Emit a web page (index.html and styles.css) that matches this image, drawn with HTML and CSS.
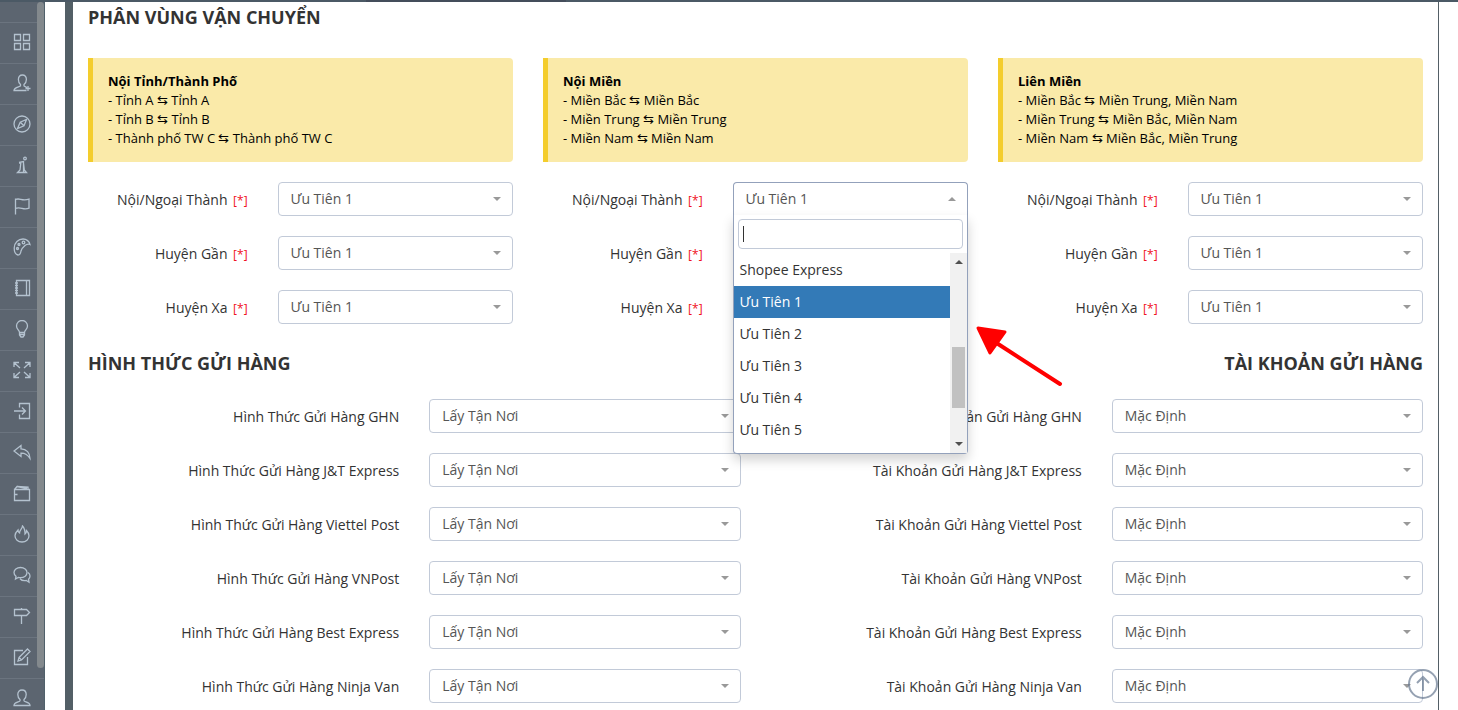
FILE: index.html
```
<!DOCTYPE html>
<html lang="vi">
<head>
  <meta charset="UTF-8">
  <meta name="viewport" content="width=device-width, initial-scale=1.0">
  <title>Phân Vùng Vận Chuyển</title>
  <link rel="stylesheet" href="styles.css">
</head>
<body>

<div class="topbar"><div class="topbar-tab"></div></div>

<div class="page">
  <nav class="sidebar" aria-label="Menu">
    <ul class="menu">
      <li><a href="#" aria-label="Tổng quan"><svg viewBox="0 0 18 18"><path d="M1.500 1.500h6v6h-6zM10.500 1.500h6v6h-6zM1.500 10.500h6v6h-6zM10.500 10.500h6v6h-6z"/></svg></a></li>
      <li><a href="#" aria-label="Thêm khách"><svg viewBox="0 0 18 18"><path d="M14 13.500c-1-.6-2.600-1-3-1.600v-1.400c1.500-1.200 2.400-3 2.400-5 0-2.700-1.500-4.500-4-4.500s-4 1.800-4 4.500c0 2 .6 3.800 2.100 5v1.400C6.900 13 1 13.200 1 16.500h12.500M15 12v5M12.500 14.500h5"/></svg></a></li>
      <li><a href="#" aria-label="Khám phá"><svg viewBox="0 0 18 18"><circle cx="9" cy="9" r="8"/><path d="M13.500 4.500l-2.500 6.300-6.500 2.700 2.700-6.300zM7.200 7.200l3.800 3.600"/></svg></a></li>
      <li><a href="#" aria-label="Thông tin"><svg viewBox="0 0 18 18"><circle cx="12" cy="2.500" r="1.300"/><path d="M6 6.500l4.500-1v1.500l.8 7 2.200 2.500h-9l2.500-2.500.8-7H6M10.500 7v9"/></svg></a></li>
      <li><a href="#" aria-label="Chiến dịch"><svg viewBox="0 0 18 18"><path d="M2.500 17.500V1.500M2.500 2.500c4.500-2 6 2 13.500-.3v9c-6 2.500-8-2-13.500.2"/></svg></a></li>
      <li><a href="#" aria-label="Giao diện"><svg viewBox="0 0 18 18"><path d="M1.200 10c0-5.500 4.300-9 8.800-9 3.500 0 6.500 2.500 7 5.500-1.500-.8-3.500-.3-5 1-2 1.700-3.500 3-4 5.500-.3 2-1 4-3 4-2.500-.5-3.800-4-3.800-7z"/><circle cx="10.500" cy="4.500" r="1.300"/><circle cx="6" cy="6.500" r="1"/><circle cx="4.500" cy="10.500" r="1"/></svg></a></li>
      <li><a href="#" aria-label="Sổ"><svg viewBox="0 0 18 18"><path d="M3.500 1.500h13v15h-13zM13.500 1.500v15M2 4h3M2 6.500h3M2 9h3M2 11.500h3M2 14h3"/></svg></a></li>
      <li><a href="#" aria-label="Gợi ý"><svg viewBox="0 0 18 18"><path d="M6.500 12.500C6.500 10 3.500 9.500 3.500 6A5.500 5.500 0 0 1 14.500 6c0 3.500-3 4-3 6.500zM6.500 12.500V15l1.500 2h2l1.500-2v-2.500M6.500 14.500h5"/></svg></a></li>
      <li><a href="#" aria-label="Mở rộng"><svg viewBox="0 0 18 18"><path d="M1 6V1.500h5M1.500 2L7 7M12 1.500h5V6M16.500 2L11 7M1 12v4.500h5M1.500 16L7 11M12 16.500h5V12M16.500 16L11 11"/></svg></a></li>
      <li><a href="#" aria-label="Nhập"><svg viewBox="0 0 18 18"><path d="M6.500 5.500v-4h10v15h-10v-4M1 9h11.500M9 5.500L12.500 9 9 12.500"/></svg></a></li>
      <li><a href="#" aria-label="Trả hàng"><svg viewBox="0 0 18 18"><path d="M8 2.500L1 8l7 5.500v-3.300c4-.2 6.500 1.300 9 5.300 0-5.500-3.500-9.500-9-9.700z"/></svg></a></li>
      <li><a href="#" aria-label="Ví"><svg viewBox="0 0 18 18"><path d="M1.500 5.500h15v11h-15zM1.500 5.500L4 2.500l10 2M4 2.500l11 .5v2.500M2 10.500h2.500"/></svg></a></li>
      <li><a href="#" aria-label="Nổi bật"><svg viewBox="0 0 18 18"><path d="M9.500 1c-.3 3-3 4-3 7-1-.5-1.500-1.500-1.500-3-1.800 1.800-3 3.500-3 5.800 0 3.600 3 6.200 7 6.200s7-2.600 7-6.200c0-2.300-1-3.800-2.500-5.300 0 1.500-.3 2.500-1.500 3.500 0-3.500-.5-6-2.500-8z"/></svg></a></li>
      <li><a href="#" aria-label="Hội thoại"><svg viewBox="0 0 18 18"><path d="M7.500 1.500c3.800 0 6.500 2.200 6.500 5s-2.700 5.200-6.500 5.200c-.8 0-1.500 0-2.200-.3L2.500 13l.5-2.700C1.700 9.400 1 8 1 6.500c0-2.800 2.700-5 6.500-5zM15 6.500c1.200.8 2 2 2 3.500 0 1.300-.6 2.400-1.500 3.200l.5 3-2.700-1.700c-3 .6-5-.3-6.300-1.800"/></svg></a></li>
      <li><a href="#" aria-label="Chỉ đường"><svg viewBox="0 0 18 18"><path d="M8.500 1v1.500M1.500 2.500h12l3 3-3 3h-12zM8.500 8.500v8.500"/></svg></a></li>
      <li><a href="#" aria-label="Bài viết"><svg viewBox="0 0 18 18"><path d="M10 2.500H1.500v14h13V9M6 9.500L14.500 1 17 3.500 8.500 12 5 13zM6 9.500L8.500 12"/></svg></a></li>
      <li><a href="#" aria-label="Tài khoản"><svg viewBox="0 0 18 18"><path d="M7 11.900v-1.400C5.500 9.300 4.800 7.500 4.800 5.500 4.800 2.800 6.500 1 9 1s4.200 1.800 4.200 4.500c0 2-.7 3.800-2.200 5v1.400c.4 1.200 6 1.300 6 4.600H1c0-3.300 5.600-3.400 6-4.600z"/></svg></a></li>
    </ul>
    <div class="sidebar-thumb"></div>
  </nav>

  <main class="content">
    <h3 class="section-title">PHÂN VÙNG VẬN CHUYỂN</h3>

    <div class="zones">
      <section class="zone">
        <div class="note">
          <b>Nội Tỉnh/Thành Phố</b><br>
          - Tỉnh A ⇆ Tỉnh A<br>
          - Tỉnh B ⇆ Tỉnh B<br>
          - Thành phố TW C ⇆ Thành phố TW C
        </div>
        <div class="form-row">
          <label for="inner1">Nội/Ngoại Thành <span class="required">[*]</span></label>
          <div class="field"><select id="inner1"><option>Ưu Tiên 1</option></select></div>
        </div>
        <div class="form-row">
          <label for="near1">Huyện Gần <span class="required">[*]</span></label>
          <div class="field"><select id="near1"><option>Ưu Tiên 1</option></select></div>
        </div>
        <div class="form-row">
          <label for="far1">Huyện Xa <span class="required">[*]</span></label>
          <div class="field"><select id="far1"><option>Ưu Tiên 1</option></select></div>
        </div>
      </section>

      <section class="zone">
        <div class="note">
          <b>Nội Miền</b><br>
          - Miền Bắc ⇆ Miền Bắc<br>
          - Miền Trung ⇆ Miền Trung<br>
          - Miền Nam ⇆ Miền Nam
        </div>
        <div class="form-row">
          <label for="inner2">Nội/Ngoại Thành <span class="required">[*]</span></label>
          <div class="field open">
            <select id="inner2"><option>Ưu Tiên 1</option></select>
            <div class="dropdown">
              <div class="search"><input type="text" aria-label="Tìm kiếm"></div>
              <div class="results">
                <ul class="options" role="listbox" aria-label="Ưu tiên">
                  <li role="option">Shopee Express</li>
                  <li role="option" class="active" aria-selected="true">Ưu Tiên 1</li>
                  <li role="option">Ưu Tiên 2</li>
                  <li role="option">Ưu Tiên 3</li>
                  <li role="option">Ưu Tiên 4</li>
                  <li role="option">Ưu Tiên 5</li>
                </ul>
                <div class="scrollbar">
                  <span class="scroll-up"></span>
                  <span class="scroll-thumb"></span>
                  <span class="scroll-down"></span>
                </div>
              </div>
            </div>
            <svg class="pointer" viewBox="0 0 90 64" width="90" height="64">
              <path d="M20 18L85 60" stroke="#f00" stroke-width="4" stroke-linecap="round"/>
              <path d="M3 4L30 8 15 29z" fill="#f00" stroke="#f00" stroke-width="3" stroke-linejoin="round"/>
            </svg>
          </div>
        </div>
        <div class="form-row">
          <label for="near2">Huyện Gần <span class="required">[*]</span></label>
          <div class="field"><select id="near2"><option>Ưu Tiên 1</option></select></div>
        </div>
        <div class="form-row">
          <label for="far2">Huyện Xa <span class="required">[*]</span></label>
          <div class="field"><select id="far2"><option>Ưu Tiên 1</option></select></div>
        </div>
      </section>

      <section class="zone">
        <div class="note">
          <b>Liên Miền</b><br>
          - Miền Bắc ⇆ Miền Trung, Miền Nam<br>
          - Miền Trung ⇆ Miền Bắc, Miền Nam<br>
          - Miền Nam ⇆ Miền Bắc, Miền Trung
        </div>
        <div class="form-row">
          <label for="inner3">Nội/Ngoại Thành <span class="required">[*]</span></label>
          <div class="field"><select id="inner3"><option>Ưu Tiên 1</option></select></div>
        </div>
        <div class="form-row">
          <label for="near3">Huyện Gần <span class="required">[*]</span></label>
          <div class="field"><select id="near3"><option>Ưu Tiên 1</option></select></div>
        </div>
        <div class="form-row">
          <label for="far3">Huyện Xa <span class="required">[*]</span></label>
          <div class="field"><select id="far3"><option>Ưu Tiên 1</option></select></div>
        </div>
      </section>
    </div>

    <div class="shipping">
      <section>
        <h3 class="section-title">HÌNH THỨC GỬI HÀNG</h3>
        <div class="form-row half">
          <label for="type1">Hình Thức Gửi Hàng GHN</label>
          <div class="field"><select id="type1"><option>Lấy Tận Nơi</option></select></div>
        </div>
        <div class="form-row half">
          <label for="type2">Hình Thức Gửi Hàng J&amp;T Express</label>
          <div class="field"><select id="type2"><option>Lấy Tận Nơi</option></select></div>
        </div>
        <div class="form-row half">
          <label for="type3">Hình Thức Gửi Hàng Viettel Post</label>
          <div class="field"><select id="type3"><option>Lấy Tận Nơi</option></select></div>
        </div>
        <div class="form-row half">
          <label for="type4">Hình Thức Gửi Hàng VNPost</label>
          <div class="field"><select id="type4"><option>Lấy Tận Nơi</option></select></div>
        </div>
        <div class="form-row half">
          <label for="type5">Hình Thức Gửi Hàng Best Express</label>
          <div class="field"><select id="type5"><option>Lấy Tận Nơi</option></select></div>
        </div>
        <div class="form-row half">
          <label for="type6">Hình Thức Gửi Hàng Ninja Van</label>
          <div class="field"><select id="type6"><option>Lấy Tận Nơi</option></select></div>
        </div>
      </section>

      <section>
        <h3 class="section-title right">TÀI KHOẢN GỬI HÀNG</h3>
        <div class="form-row half">
          <label for="account1">Tài Khoản Gửi Hàng GHN</label>
          <div class="field"><select id="account1"><option>Mặc Định</option></select></div>
        </div>
        <div class="form-row half">
          <label for="account2">Tài Khoản Gửi Hàng J&amp;T Express</label>
          <div class="field"><select id="account2"><option>Mặc Định</option></select></div>
        </div>
        <div class="form-row half">
          <label for="account3">Tài Khoản Gửi Hàng Viettel Post</label>
          <div class="field"><select id="account3"><option>Mặc Định</option></select></div>
        </div>
        <div class="form-row half">
          <label for="account4">Tài Khoản Gửi Hàng VNPost</label>
          <div class="field"><select id="account4"><option>Mặc Định</option></select></div>
        </div>
        <div class="form-row half">
          <label for="account5">Tài Khoản Gửi Hàng Best Express</label>
          <div class="field"><select id="account5"><option>Mặc Định</option></select></div>
        </div>
        <div class="form-row half">
          <label for="account6">Tài Khoản Gửi Hàng Ninja Van</label>
          <div class="field"><select id="account6"><option>Mặc Định</option></select></div>
        </div>
      </section>
    </div>
  </main>
</div>

<button class="back-to-top" aria-label="Lên đầu trang">
  <svg viewBox="0 0 30 30" width="30" height="30">
    <circle cx="15" cy="15" r="14"/>
    <path d="M15 22V9M9 14l6-6 6 6"/>
  </svg>
</button>

</body>
</html>
```
FILE: styles.css
```
* {
  box-sizing: border-box;
}

body {
  margin: 0;
  height: 100vh;
  overflow: hidden;
  display: flex;
  flex-direction: column;
  font-family: "Open Sans", sans-serif;
  font-size: 14px;
  line-height: 20px;
  color: #333;
  background-color: #fff;
}

.topbar {
  flex: none;
  height: 2px;
  padding-left: 366px;
  background-color: #4b5965;
}

.topbar-tab {
  width: 200px;
  height: 2px;
  background-color: #444d5b;
}

.page {
  flex: 1;
  min-height: 0;
  display: flex;
}

/* sidebar */
.sidebar {
  position: relative;
  flex: none;
  width: 45px;
  margin-right: 20px;
  overflow: hidden;
  background-color: #5c6570;
  border-right: 1px solid #50606a;
}

.menu {
  list-style: none;
  margin: 0;
  padding: 20px 0 0;
}

.menu a {
  display: block;
  height: 41px;
  padding: 10px 0 0 13px;
  border-top: 1px solid #6b747f;
}

.menu svg {
  display: block;
  width: 18px;
  height: 18px;
  fill: none;
  stroke: #b4c2cf;
  stroke-width: 1.3;
}

.sidebar-thumb {
  position: absolute;
  top: 0;
  right: 0;
  bottom: 42px;
  width: 7px;
  border-radius: 7px;
  background-color: #83898d;
}

/* content */
.content {
  flex: 1;
  min-width: 0;
  margin-right: 19px;
  padding: 5px 15px 0;
  border-left: 8px solid #535f66;
  border-right: 1px solid #535f66;
}

.section-title {
  margin: 0 0 26px;
  font-size: 18px;
  font-weight: 700;
  line-height: 20px;
}

.section-title.right {
  text-align: right;
}

.zones {
  display: grid;
  grid-template-columns: repeat(3, 1fr);
  gap: 30px;
  padding: 5px 0 9px;
}

.shipping {
  display: grid;
  grid-template-columns: repeat(2, 1fr);
  gap: 30px;
}

.note {
  margin-bottom: 20px;
  padding: 14px 15px;
  border-left: 5px solid #f4cd2d;
  border-radius: 0 4px 4px 0;
  background-color: #faeaa9;
  color: #000;
  font-size: 13px;
  line-height: 19px;
}

.form-row {
  display: grid;
  grid-template-columns: 5fr 7fr;
  margin: 0 -15px 20px;
}

.form-row.half {
  grid-template-columns: 1fr 1fr;
}

.form-row label {
  padding: 8px 15px 0;
  text-align: right;
  white-space: nowrap;
  justify-self: end;
}

.required {
  margin-left: 2px;
  font-size: 12px;
  color: #f01020;
}

.field {
  position: relative;
  margin: 0 15px;
}

.field select {
  display: block;
  width: 100%;
  height: 34px;
  padding: 0 24px 0 12px;
  border: 1px solid #c2cad8;
  border-radius: 4px;
  background-color: #fff;
  color: #555;
  font: inherit;
  appearance: none;
}

.field::after {
  content: "";
  position: absolute;
  top: 15px;
  right: 12px;
  border: 4px solid transparent;
  border-top-color: #999;
  border-bottom: 0;
  pointer-events: none;
}

/* opened select */
.field.open select {
  border-color: #93a1bb;
  border-bottom-color: transparent;
  border-radius: 4px 4px 0 0;
}

.field.open::after {
  border-top: 0;
  border-bottom: 4px solid #999;
}

.dropdown {
  position: absolute;
  z-index: 2;
  top: 33px;
  left: 0;
  right: 0;
  border: 1px solid #93a1bb;
  border-top: 0;
  border-radius: 0 0 4px 4px;
  background-color: #fff;
  box-shadow: 0 6px 12px rgba(0, 0, 0, 0.175);
}

.search {
  position: relative;
  padding: 4px;
}

.search input {
  display: block;
  width: 100%;
  height: 30px;
  padding: 4px;
  border: 1px solid #c2cad8;
  border-radius: 4px;
  font: inherit;
}

/* text caret */
.search::after {
  content: "";
  position: absolute;
  top: 11px;
  left: 9px;
  width: 1px;
  height: 16px;
  background-color: #333;
}

.results {
  display: flex;
  height: 200px;
}

.options {
  flex: 1;
  list-style: none;
  margin: 0;
  padding: 1px 0 0;
}

.options li {
  padding: 6px;
}

.options .active {
  background-color: #337ab7;
  color: #fff;
}

.scrollbar {
  display: flex;
  flex-direction: column;
  align-items: center;
  justify-content: space-between;
  width: 17px;
  padding: 7px 0;
  background-color: #f1f1f1;
}

.scroll-up,
.scroll-down {
  border: 4px solid transparent;
}

.scroll-up {
  border-top: 0;
  border-bottom-color: #505050;
}

.scroll-down {
  border-bottom: 0;
  border-top-color: #505050;
}

.scroll-thumb {
  width: 13px;
  height: 61px;
  margin-top: 48px;
  background-color: #c1c1c1;
}

.pointer {
  position: absolute;
  z-index: 2;
  top: 142px;
  left: 100%;
  margin-left: 7px;
  fill: none;
}

.back-to-top {
  position: fixed;
  right: 20px;
  bottom: 11px;
  padding: 0;
  border: 0;
  background: none;
  cursor: pointer;
}

.back-to-top svg {
  display: block;
  fill: none;
  stroke: #687991;
  stroke-width: 2;
  opacity: 0.7;
}
```
